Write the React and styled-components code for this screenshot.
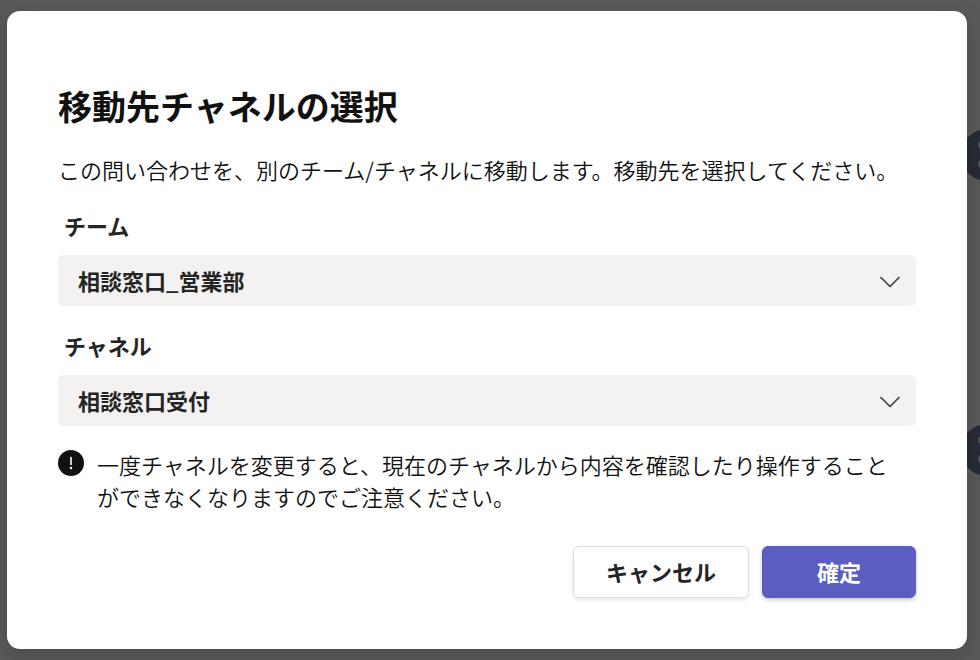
import React from "react";
import styled, { createGlobalStyle } from "styled-components";

const GlobalStyle = createGlobalStyle`
  *, *::before, *::after { box-sizing: border-box; }
  body {
    margin: 0;
    background: #595959;
    color: #111110;
    font-family: "Noto Sans CJK JP", sans-serif;
    font-size: 22px;
    font-weight: 350;
    line-height: 32px;
  }
`;

const Backdrop = styled.main`
  position: relative;
  min-height: 100vh;
  padding: 11px 13px 11px 7px;
  background: #595959;
  overflow: hidden;
`;

const Avatar = styled.svg`
  position: absolute;
  top: ${(p) => p.$top};
  right: -33px;
  width: 52px;
  height: 52px;
`;

const Dialog = styled.section`
  position: relative;
  padding: 71px 51px 51px;
  border-radius: 13px;
  background: #fff;
  box-shadow: 0 8px 24px rgba(0, 0, 0, 0.15);
`;

const Title = styled.h1`
  margin: 0;
  font-size: 34px;
  line-height: 48px;
  font-weight: 700;
`;

const Lead = styled.p`
  margin: 23px 0 24px;
`;

const Fields = styled.div`
  display: flex;
  flex-direction: column;
  gap: 23px;
`;

const Field = styled.div`
  display: flex;
  flex-direction: column;
  gap: 14px;
`;

const Label = styled.label`
  padding-left: 6px;
  color: #242424;
  font-weight: 700;
`;

const SelectBox = styled.div`
  display: grid;
  align-items: center;

  > * {
    grid-area: 1 / 1;
  }
`;

const Select = styled.select`
  appearance: none;
  width: 100%;
  height: 51px;
  padding: 0 60px 2px 20px;
  border: 0;
  border-radius: 6px;
  background: #f3f2f1;
  color: #242424;
  font: inherit;
  font-weight: 700;
`;

const Chevron = styled.svg`
  justify-self: end;
  width: 20px;
  height: 12px;
  margin: 2px 16px 0 0;
  pointer-events: none;
`;

const Notice = styled.div`
  display: flex;
  align-items: flex-start;
  gap: 13px;
  margin-top: 22px;
  padding-right: 14px;
`;

const NoticeIcon = styled.svg`
  flex: none;
  width: 26px;
  height: 26px;
  margin-top: 2px;
`;

const NoticeText = styled.p`
  margin: 0;
`;

const Actions = styled.div`
  display: flex;
  justify-content: flex-end;
  gap: 13px;
  margin-top: 34px;
`;

const Button = styled.button`
  min-width: 154px;
  height: 52px;
  padding: 0 32px 3px;
  border: 1px solid ${(p) => (p.$primary ? "#5b5dc0" : "#dedede")};
  border-radius: 6px;
  background: ${(p) => (p.$primary ? "#5b5dc0" : "#fff")};
  color: ${(p) => (p.$primary ? "#fff" : "#242424")};
  box-shadow: 0 2px 4px rgba(0, 0, 0, ${(p) => (p.$primary ? 0.22 : 0.1)});
  font: inherit;
  font-weight: 700;
`;

function BackgroundAvatar({ top }) {
  return (
    <Avatar $top={top} viewBox="0 0 52 52" aria-hidden="true">
      <circle cx="26" cy="26" r="26" fill="#262b37" />
      <g fill="none" stroke="#555c60" strokeWidth="2.5">
        <circle cx="22.5" cy="16" r="4" />
        <circle cx="22.5" cy="35" r="4" />
      </g>
    </Avatar>
  );
}

function SelectField({ id, label, value }) {
  return (
    <Field>
      <Label htmlFor={id}>{label}</Label>
      <SelectBox>
        <Select id={id} defaultValue={value}>
          <option value={value}>{value}</option>
        </Select>
        <Chevron viewBox="0 0 20 12" aria-hidden="true">
          <path
            d="M1 1.5 L10 10.5 L19 1.5"
            fill="none"
            stroke="#424242"
            strokeWidth="1.7"
            strokeLinecap="round"
            strokeLinejoin="round"
          />
        </Chevron>
      </SelectBox>
    </Field>
  );
}

export default function App() {
  return (
    <>
      <GlobalStyle />
      <Backdrop lang="ja">
        <BackgroundAvatar top="129px" />
        <BackgroundAvatar top="424px" />
        <Dialog role="dialog" aria-labelledby="dialog-title">
          <Title id="dialog-title">移動先チャネルの選択</Title>
          <Lead>
            この問い合わせを、別のチーム/チャネルに移動します。移動先を選択してください。
          </Lead>
          <Fields>
            <SelectField id="team" label="チーム" value="相談窓口_営業部" />
            <SelectField id="channel" label="チャネル" value="相談窓口受付" />
          </Fields>
          <Notice>
            <NoticeIcon viewBox="0 0 26 26" aria-hidden="true">
              <circle cx="13" cy="13" r="13" fill="#111110" />
              <path d="M13 7.5 V14.5" stroke="#fff" strokeWidth="1.6" strokeLinecap="round" />
              <circle cx="13" cy="18" r="1.2" fill="#fff" />
            </NoticeIcon>
            <NoticeText>
              一度チャネルを変更すると、現在のチャネルから内容を確認したり操作することができなくなりますのでご注意ください。
            </NoticeText>
          </Notice>
          <Actions>
            <Button type="button">キャンセル</Button>
            <Button type="button" $primary>
              確定
            </Button>
          </Actions>
        </Dialog>
      </Backdrop>
    </>
  );
}
